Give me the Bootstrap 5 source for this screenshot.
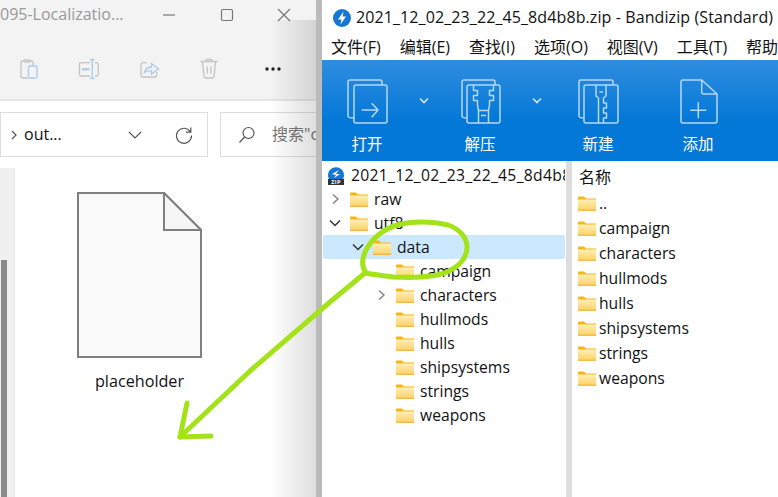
<!DOCTYPE html>
<html lang="en">
<head>
<meta charset="UTF-8" />
<title>Bandizip</title>
<link rel="stylesheet" href="https://cdn.jsdelivr.net/npm/bootstrap@5.3.0/dist/css/bootstrap.min.css" />
<style>
html, body { height: 497px; overflow: hidden; }
body { font-family: "Open Sans", "Noto Sans CJK SC", sans-serif; font-size: 15.7px; color: #111; background: #fff; line-height: 1.2; }
.page { width: 778px; height: 497px; }
.explorer { width: 316px; flex: none; overflow: hidden; }
.gutter { width: 6px; flex: none; background: #bbb; }
.bandi { width: 456px; flex: none; overflow: hidden; }

.ex-title { height: 30px; background: #f3f3f3; color: #999; font-size: 16px; }
.ex-title span { width: 150px; }
.ex-title svg { margin-right: 17px; }
.ex-tools { height: 71px; background: #f3f3f3; border-bottom: 2px solid #e5e5e5; padding-left: 17px; padding-top: 8px; }
.ex-tools svg { width: 24px; height: 24px; margin-right: 36px; flex: none; }
.ex-tools .tool-sep { width: 1px; height: 40px; background: #e2e2e2; margin-left: -15px; margin-right: 19px; }
.ex-address { height: 67px; padding-top: 11px; }
.path-box { width: 208px; height: 45px; flex: none; border: 1px solid #ddd; font-size: 16px; color: #111; }
.path-name { margin-left: 5px; }
.path-chev { margin-left: auto; margin-right: 33px; }
.path-reload { margin-right: 14px; }
.search-box { width: 96px; height: 45px; flex: none; margin-left: 12px; border: 1px solid #ddd; border-right: 0; color: #777; font-size: 16px; white-space: nowrap; overflow: hidden; }
.search-ico { margin-left: 17px; flex: none; }
.search-hint { margin-left: 16px; }
.ex-body { height: 329px; }
.side-rail { width: 15px; background: #f0f0f0; border-right: 1px solid #e8e8e8; padding-top: 92px; flex: none; }
.rail-thumb { width: 6px; height: 240px; margin-left: 1px; background: #8a8a8a; }
.file-tile { width: 123px; margin-left: 63px; padding-top: 24px; }
.file-tile svg { width: 125px; height: 166px; }
.file-name { width: 125px; margin-top: 14px; font-size: 16.2px; color: #111; }
.edge-shade { top: 20px; right: 0; bottom: 0; width: 46px; background: linear-gradient(to right, rgba(0,0,0,0), rgba(0,0,0,.13)); pointer-events: none; }

.bz-title { height: 35px; padding-left: 10px; font-size: 16px; letter-spacing: .1px; white-space: nowrap; }
.bz-menu { height: 25px; padding-left: 9px; gap: 19px; font-size: 16px; white-space: nowrap; }
.bz-tools { height: 101px; background: linear-gradient(to bottom, #2f8ddf, #0478d7 60%, #0478d7); color: #fff; padding-left: 15px; font-size: 15.5px; }
.tool-item { width: 60px; }
.tool-item svg { width: 60px; height: 60px; margin-top: 12px; fill: none; stroke: #b5d8f5; stroke-width: 1.5; stroke-linejoin: round; }
.tool-item div { margin-top: 3px; }
.tool-drop { width: 53px; padding-top: 30px; }
.tool-drop svg { width: 12px; height: 8px; fill: none; stroke: #cfe5f8; stroke-width: 1.6; }
.item-new { margin-left: 5px; }
.item-add { margin-left: 40px; }

.bz-panes { height: 336px; }
.tree-pane { width: 244px; flex: none; padding-top: 3px; overflow: hidden; }
.pane-sep { width: 6px; flex: none; background: #ddd; }
.list-pane { flex: 1; padding-top: 4px; }
.tree-row { height: 24px; margin-left: 1px; margin-right: 1px; white-space: nowrap; overflow: hidden; border-radius: 2px; }
.tree-root { height: 23px; padding-left: 4px; gap: 6px; letter-spacing: .3px; }
.tree-root svg { width: 18px; height: 18px; flex: none; }
.tree-row.active-row { background: #cce8ff; }
.lv1 { padding-left: 4px; }
.lv2 { padding-left: 27px; }
.lv3 { padding-left: 50px; }
.twist { width: 16px; height: 12px; flex: none; fill: none; stroke-width: 1.5; margin-right: 7px; }
.folder-ico { width: 18px; height: 15px; flex: none; margin-right: 6px; }
.list-head { height: 24px; margin-bottom: 1.5px; padding-left: 7px; padding-top: 2px; font-size: 16px; }
.list-row { height: 25px; padding-left: 6px; }
.list-row .folder-ico { margin-right: 3px; }
.ink { position: absolute; left: 0; top: 0; width: 778px; height: 497px; fill: none; stroke: #a4e21a; stroke-width: 5; stroke-linecap: round; stroke-linejoin: round; pointer-events: none; }
</style>
</head>
<body>

<svg width="0" height="0" class="position-absolute">
  <defs>
    <linearGradient id="fbody" x1="0" y1="0" x2="0" y2="1">
      <stop offset="0" stop-color="#ffefb8" />
      <stop offset="1" stop-color="#fdd263" />
    </linearGradient>
    <symbol id="folder" viewBox="0 0 18 15">
      <path d="M0 1.500Q0 .5 1 .5H6L8 2.500H18V4H0Z" fill="#f8b616" />
      <path d="M0 3.500H18V14.500H0Z" fill="url(#fbody)" />
      <path d="M0 13.700H18V14.700H0Z" fill="#eeab26" />
    </symbol>
  </defs>
</svg>

<div class="page d-flex position-relative">

  <!-- explorer window behind -->
  <div class="explorer position-relative">
    <div class="ex-title d-flex align-items-center justify-content-between">
      <span class="text-nowrap">095-Localizatio...</span>
      <svg width="140" height="16" viewBox="0 0 140 16" fill="none" stroke="#777" stroke-width="1.2">
        <path d="M4 8H16" />
        <rect x="62.5" y="2.500" width="11" height="11" rx="1.500" />
        <path d="M119 2L131 14M131 2L119 14" />
      </svg>
    </div>
    <div class="ex-tools d-flex align-items-center">
      <svg viewBox="0 0 24 24" fill="none" stroke-width="1.300">
        <path d="M7 4H6Q4 4 4 6V19Q4 21 6 21H11M13 4H14Q16 4 16 6V9M7 4Q7 3 8 3H12Q13 3 13 4Q13 5 12 5H8Q7 5 7 4Z" stroke="#c4c4c4" />
        <rect x="11.500" y="9" width="8.500" height="12" rx="1.500" stroke="#a5cdee" />
      </svg>
      <svg viewBox="0 0 24 24" fill="none" stroke-width="1.300">
        <path d="M13 5.700H4Q2.500 5.700 2.500 7.200V17.500Q2.500 19 4 19H13M18 5.700H20Q21.300 5.700 21.300 7.200V17.500Q21.300 19 20 19H18" stroke="#c4c4c4" />
        <path d="M15.300 3V21M13 2.500H17.500M13 21.500H17.500" stroke="#a5cdee" />
        <path d="M5 12.300H12.500" stroke="#a5cdee" stroke-width="2.200" />
      </svg>
      <svg viewBox="0 0 24 24" fill="none" stroke-width="1.300">
        <path d="M10 5.700H6Q4 5.700 4 7.700V18Q4 20 6 20H17.500Q19.700 20 19.700 18V15" stroke="#c4c4c4" />
        <path d="M7.500 15.500Q8.500 10.500 14.500 10V6.500L21.500 12L14.500 17V14Q10 13.500 7.500 15.500Z" stroke="#a5cdee" />
      </svg>
      <svg viewBox="0 0 24 24" fill="none" stroke-width="1.300" stroke="#c4c4c4">
        <path d="M3.500 4.500H20.500M9 4.500V3Q9 2.500 10 2.500H14Q15 2.500 15 3V4.500M5.500 5L7 19.500Q7 21 8.500 21H15.500Q17 21 17 19.500L18.500 5M10.300 9.500V16.500M13.800 9.500V16.500" />
      </svg>
      <div class="tool-sep"></div>
      <svg viewBox="0 0 24 24" fill="#222"><circle cx="6" cy="12" r="1.700" /><circle cx="12" cy="12" r="1.700" /><circle cx="18" cy="12" r="1.700" /></svg>
    </div>
    <div class="ex-address d-flex">
      <div class="path-box d-flex align-items-center">
        <svg width="10" height="10" viewBox="0 0 10 10" fill="none" stroke="#555" stroke-width="1.200" class="ms-2 flex-none"><path d="M3 1L7 5L3 9" /></svg>
        <span class="path-name">out...</span>
        <svg width="14" height="8" viewBox="0 0 14 8" fill="none" stroke="#555" stroke-width="1.200" class="path-chev"><path d="M1 1L7 7L13 1" /></svg>
        <svg width="18" height="18" viewBox="0 0 18 18" fill="none" stroke="#555" stroke-width="1.200" class="path-reload"><path d="M15.500 6A7.500 7.500 0 1 0 16.500 9.500M15.800 1.500V6.200H11" /></svg>
      </div>
      <div class="search-box d-flex align-items-center">
        <svg width="18" height="18" viewBox="0 0 18 18" fill="none" stroke="#555" stroke-width="1.200" class="search-ico"><circle cx="10.500" cy="7" r="5.500" /><path d="M6.500 11L1.500 16.500" /></svg>
        <span class="search-hint">搜索"out...</span>
      </div>
    </div>
    <div class="ex-body d-flex">
      <div class="side-rail"><div class="rail-thumb"></div></div>
      <div class="file-tile d-flex flex-column align-items-center">
        <svg viewBox="0 0 125 166" fill="#fafafa" stroke="#808080" stroke-width="2">
          <path d="M1 1H87L124 38V165H1Z" />
          <path d="M87 1V38H124Z" fill="#f6f6f6" />
        </svg>
        <div class="file-name text-center">placeholder</div>
      </div>
    </div>
    <div class="edge-shade position-absolute"></div>
  </div>

  <div class="gutter"></div>

  <!-- bandizip window in front -->
  <div class="bandi d-flex flex-column">
    <div class="bz-title d-flex align-items-center gap-1">
      <svg width="20" height="20" viewBox="0 0 20 20" class="flex-none">
        <circle cx="10" cy="10" r="9" fill="#1577d3" />
        <path d="M11.500 3.500L6 11.500H9.300L8.500 16.500L14 8.500H10.700Z" fill="#fff" />
      </svg>
      <span>2021_12_02_23_22_45_8d4b8b.zip - Bandizip (Standard)</span>
    </div>
    <div class="bz-menu d-flex align-items-center">
      <span>文件(F)</span><span>编辑(E)</span><span>查找(I)</span><span>选项(O)</span><span>视图(V)</span><span>工具(T)</span><span>帮助(H)</span>
    </div>
    <div class="bz-tools d-flex">
      <div class="tool-item text-center">
        <svg viewBox="0 0 60 60"><path d="M17 46Q11 46 11 44V10Q11 8 13 8H43Q45 8 45 10V13" /><rect x="17" y="13" width="33" height="38" rx="2" /><path d="M24.700 38H41M34.700 31.300L41 38L34.700 45.300" /></svg>
        <div>打开</div>
      </div>
      <div class="tool-drop text-center"><svg viewBox="0 0 12 8"><path d="M2 1.500L6 5.500L10 1.500" /></svg></div>
      <div class="tool-item text-center">
        <svg viewBox="0 0 60 60"><path d="M17 46Q12 46 12 44V10Q12 8 14 8H43Q45 8 45 10V13" /><rect x="17" y="13" width="33" height="38" rx="2" /><path d="M23.500 13V18.500H27.500V23.500H23.500V28.500H27.500V33L28.500 38.500V51M43.500 13V18.500H39.500V23.500H43.500V28.500H39.500V33L38.500 38.500V51M28.500 38.500H38.500M31 43.500H36" /></svg>
        <div>解压</div>
      </div>
      <div class="tool-drop text-center"><svg viewBox="0 0 12 8"><path d="M2 1.500L6 5.500L10 1.500" /></svg></div>
      <div class="tool-item text-center item-new">
        <svg viewBox="0 0 60 60"><path d="M16 46Q11 46 11 44V10Q11 8 13 8H43Q45 8 45 10V13" /><rect x="16" y="13" width="34" height="38" rx="2" /><path d="M28 13V24L30.500 26V51M38 13V24L35.500 26V31H38.500V36H35.500V41H38.500V46H35.500V51M31.500 20H35" /></svg>
        <div>新建</div>
      </div>
      <div class="tool-item text-center item-add">
        <svg viewBox="0 0 60 60"><path d="M33.700 8H15Q13 8 13 10V49Q13 51 15 51H47Q49 51 49 49V22ZM33.700 8V20Q33.700 22 36 22H49M30.300 30.300V46.300M22.300 38.300H38.300" /></svg>
        <div>添加</div>
      </div>
    </div>
    <div class="bz-panes d-flex">
      <div class="tree-pane">
        <div class="tree-row tree-root d-flex align-items-center">
          <svg viewBox="0 0 18 18">
            <path d="M2 12A8 8 0 1 1 16 12Z" fill="#1577d3" />
            <path d="M5 7L12 3L9 7H13L7 11L9 8Z" fill="#fff" />
            <rect x="1" y="12" width="16" height="6" fill="#333" />
            <text x="9" y="17" font-size="5.500" font-weight="700" fill="#fff" text-anchor="middle">ZIP</text>
          </svg>
          <span>2021_12_02_23_22_45_8d4b8b.zip</span>
        </div>
        <div class="tree-row lv1 d-flex align-items-center"><svg class="twist" viewBox="0 0 16 12" stroke="#888"><path d="M6 1.500L11 6L6 10.500" /></svg><svg class="folder-ico"><use href="#folder" /></svg>raw</div>
        <div class="tree-row lv1 d-flex align-items-center"><svg class="twist" viewBox="0 0 16 12" stroke="#333"><path d="M3 3.500L8 8.500L13 3.500" /></svg><svg class="folder-ico"><use href="#folder" /></svg>utf8</div>
        <div class="tree-row lv2 active-row d-flex align-items-center"><svg class="twist" viewBox="0 0 16 12" stroke="#333"><path d="M3 3.500L8 8.500L13 3.500" /></svg><svg class="folder-ico"><use href="#folder" /></svg>data</div>
        <div class="tree-row lv3 d-flex align-items-center"><span class="twist"></span><svg class="folder-ico"><use href="#folder" /></svg>campaign</div>
        <div class="tree-row lv3 d-flex align-items-center"><svg class="twist" viewBox="0 0 16 12" stroke="#888"><path d="M6 1.500L11 6L6 10.500" /></svg><svg class="folder-ico"><use href="#folder" /></svg>characters</div>
        <div class="tree-row lv3 d-flex align-items-center"><span class="twist"></span><svg class="folder-ico"><use href="#folder" /></svg>hullmods</div>
        <div class="tree-row lv3 d-flex align-items-center"><span class="twist"></span><svg class="folder-ico"><use href="#folder" /></svg>hulls</div>
        <div class="tree-row lv3 d-flex align-items-center"><span class="twist"></span><svg class="folder-ico"><use href="#folder" /></svg>shipsystems</div>
        <div class="tree-row lv3 d-flex align-items-center"><span class="twist"></span><svg class="folder-ico"><use href="#folder" /></svg>strings</div>
        <div class="tree-row lv3 d-flex align-items-center"><span class="twist"></span><svg class="folder-ico"><use href="#folder" /></svg>weapons</div>
      </div>
      <div class="pane-sep"></div>
      <div class="list-pane">
        <div class="list-head d-flex align-items-center">名称</div>
        <div class="list-row d-flex align-items-center"><svg class="folder-ico"><use href="#folder" /></svg>..</div>
        <div class="list-row d-flex align-items-center"><svg class="folder-ico"><use href="#folder" /></svg>campaign</div>
        <div class="list-row d-flex align-items-center"><svg class="folder-ico"><use href="#folder" /></svg>characters</div>
        <div class="list-row d-flex align-items-center"><svg class="folder-ico"><use href="#folder" /></svg>hullmods</div>
        <div class="list-row d-flex align-items-center"><svg class="folder-ico"><use href="#folder" /></svg>hulls</div>
        <div class="list-row d-flex align-items-center"><svg class="folder-ico"><use href="#folder" /></svg>shipsystems</div>
        <div class="list-row d-flex align-items-center"><svg class="folder-ico"><use href="#folder" /></svg>strings</div>
        <div class="list-row d-flex align-items-center"><svg class="folder-ico"><use href="#folder" /></svg>weapons</div>
      </div>
    </div>
  </div>

  <!-- green hand-drawn annotation on top of everything -->
  <svg class="ink" viewBox="0 0 778 497">
    <path d="M366 273C361 266 362 258 366 250C372 238 384 229 397 225C412 221 432 221 448 225C460 229 467 238 467 247C467 258 460 266 447 272C435 277 412 278 394 277C385 276 375 275 366 273Z" />
    <path d="M365 273L330 302L250 371L180 437" />
    <path d="M187 403L180 437L211 436" />
  </svg>
</div>

</body>
</html>
